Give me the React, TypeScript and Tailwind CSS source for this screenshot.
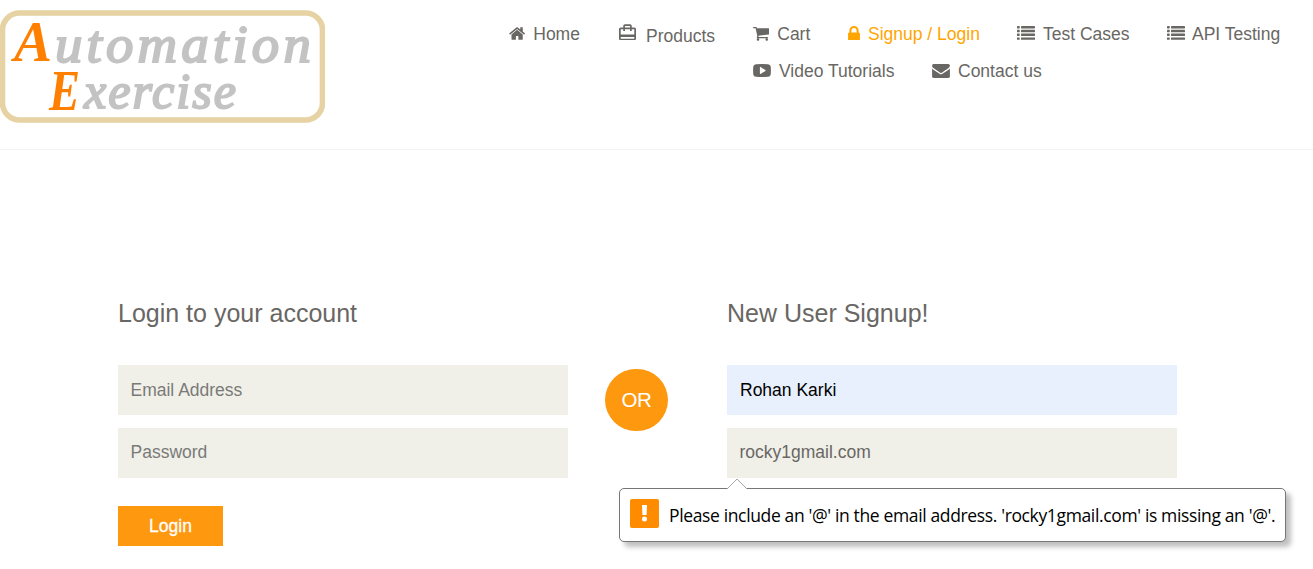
import React from "react";

type IconProps = { viewBox: string; className: string; children: React.ReactNode };

function Icon({ viewBox, className, children }: IconProps) {
  return (
    <svg viewBox={viewBox} className={`block shrink-0 ${className}`} fill="currentColor" aria-hidden="true">
      {children}
    </svg>
  );
}

const HomeIcon = () => (
  <Icon viewBox="64 256 1664 1280" className="w-[16.25px] h-[13px] -mt-px">
    <path d="M1472 992v480q0 26-19 45t-45 19h-384v-384h-256v384h-384q-26 0-45-19t-19-45v-480q0-1 .5-3t.5-3l575-474 575 474q1 2 1 6zm223-69l-62 74q-8 9-21 11h-3q-13 0-21-7l-692-577-692 577q-12 8-24 7-13-2-21-11l-62-74q-8-10-7-23.5t11-21.5l719-599q32-26 76-26t76 26l244 204v-195q0-14 9-23t23-9h192q14 0 23 9t9 23v408l219 182q10 8 11 21.5t-7 23.5z" />
  </Icon>
);

const TravelIcon = () => (
  <Icon viewBox="2 2 20 19" className="w-[17px] h-[16.5px]">
    <path d="M20 6h-3V4c0-1.11-.89-2-2-2H9c-1.11 0-2 .89-2 2v2H4c-1.11 0-2 .89-2 2v11c0 1.11.89 2 2 2h16c1.11 0 2-.89 2-2V8c0-1.11-.89-2-2-2zM9 4h6v2H9V4zm11 15H4v-2h16v2zm0-5H4V8h3v2h2V8h6v2h2V8h3v6z" />
  </Icon>
);

const CartIcon = () => (
  <Icon viewBox="64 256 1664 1408" className="w-[16.25px] h-[13.75px]">
    <path d="M704 1536q0 52-38 90t-90 38-90-38-38-90 38-90 90-38 90 38 38 90zm896 0q0 52-38 90t-90 38-90-38-38-90 38-90 90-38 90 38 38 90zm128-1088v512q0 24-16.5 42.5t-40.5 21.5l-1044 122q13 60 13 70 0 16-24 64h920q26 0 45 19t19 45-19 45-45 19h-1024q-26 0-45-19t-19-45q0-11 8-31.5t16-36 21.5-40 15.5-29.5l-177-823h-204q-26 0-45-19t-19-45 19-45 45-19h256q16 0 28.5 6.5t19.5 15.5 13 24.5 8 26 5.5 29.5 4.5 26h1201q26 0 45 19t19 45z" />
  </Icon>
);

const LockIcon = () => (
  <Icon viewBox="320 128 1152 1408" className="w-[12px] h-[14.5px] -mt-[2px]">
    <path d="M640 768h512v-192q0-106-75-181t-181-75-181 75-75 181v192zm832 96v576q0 40-28 68t-68 28h-960q-40 0-68-28t-28-68v-576q0-40 28-68t68-28h32v-192q0-184 132-316t316-132 316 132 132 316v192h32q40 0 68 28t28 68z" />
  </Icon>
);

const ListIcon = () => (
  <Icon viewBox="0 0 18 14" className="w-[18px] h-[14px] -mt-[2px]">
    {[0, 3.8, 7.6, 11.4].map((y) => (
      <React.Fragment key={y}>
        <rect x="0" y={y} width="2.7" height="2.4" rx="0.4" />
        <rect x="4" y={y} width="14" height="2.4" rx="0.4" />
      </React.Fragment>
    ))}
  </Icon>
);

const VideoIcon = () => (
  <Icon viewBox="0 0 18 13" className="w-[18px] h-[13px] -mt-px">
    <path
      fillRule="evenodd"
      d="M3 .2Q9-.2 15 .2Q17.4.3 17.7 2.6Q18.1 6.5 17.7 10.4Q17.4 12.7 15 12.8Q9 13.2 3 12.8Q.6 12.7.3 10.4Q-.1 6.5.3 2.6Q.6.3 3 .2ZM6.9 3.1V9.7Q7 10.2 7.5 10L12.4 6.9Q12.8 6.5 12.4 6.1L7.5 2.9Q7 2.7 6.9 3.1Z"
    />
  </Icon>
);

const MailIcon = () => (
  <Icon viewBox="0 256 1792 1408" className="w-[18px] h-[14px]">
    <path d="M1792 710v794q0 66-47 113t-113 47h-1472q-66 0-113-47t-47-113v-794q44 49 101 87 362 246 497 345 57 42 92.5 65.5t94.5 48 110 24.5h2q51 0 110-24.5t94.5-48 92.5-65.5q170-123 498-345 57-39 100-87zm0-294q0 79-49 151t-122 123q-376 261-468 325-10 7-42.5 31t-54 38.5-52 32.5-57.5 27-50 9h-2q-23 0-50-9t-57.5-27-52-32.5-54-38.5-42.5-31q-91-64-262-182.5t-205-142.5q-62-42-117-115.5t-55-136.5q0-78 41.5-130t118.5-52h1472q65 0 112.5 47t47.5 113z" />
  </Icon>
);

type NavItemProps = { icon: React.ReactNode; label: string; className: string; active?: boolean };

function NavItem({ icon, label, className, active }: NavItemProps) {
  return (
    <li className={`flex h-5 shrink-0 items-center whitespace-nowrap ${active ? "text-[#ffa500]" : "text-[#696763]"} ${className}`}>
      {icon}
      <a href="#">{label}</a>
    </li>
  );
}

function Logo() {
  return (
    <svg width="325" height="113" viewBox="0 0 325 113" className="mt-[10px] block" role="img" aria-label="Automation Exercise">
      <rect x="2.5" y="3" width="320" height="107" rx="17" fill="none" stroke="#e6d2a2" strokeWidth="5.6" />
      <g fontFamily="'Liberation Serif', serif" fontStyle="italic" fontWeight="700">
        <text x="14" y="51" fontSize="58" fill="#ff8000" textLength="38" lengthAdjust="spacingAndGlyphs">A</text>
        <text x="55" y="52" fontSize="52" fill="#c3c3c3" fontWeight="400" stroke="#c3c3c3" strokeWidth="2" letterSpacing="4" textLength="260" lengthAdjust="spacingAndGlyphs">utomation</text>
        <text x="49" y="100" fontSize="58" fill="#ff8000" textLength="31" lengthAdjust="spacingAndGlyphs">E</text>
        <text x="84" y="98" fontSize="50" fill="#c3c3c3" fontWeight="400" stroke="#c3c3c3" strokeWidth="2" letterSpacing="2" textLength="154" lengthAdjust="spacingAndGlyphs">xercise</text>
      </g>
    </svg>
  );
}

const field =
  "block h-[50px] w-[450px] bg-[#f0f0e9] px-[12.5px] text-[17.5px] text-[#696763] placeholder:text-[#7a7a78] outline-none";

export default function App() {
  return (
    <div className="h-[569px] w-[1313px] overflow-hidden bg-white font-['Liberation_Sans',Arial,sans-serif]">
      <header className="flex h-[150px] border-b border-[#f3f3f2]">
        <div className="w-[509px] shrink-0">
          <Logo />
        </div>
        <nav className="flex pt-6 text-[17.5px] leading-5">
          <ul className="flex">
            <NavItem icon={<HomeIcon />} label="Home" className="w-[110px] gap-[8px]" />
            <NavItem icon={<span className="-mt-[8px]"><TravelIcon /></span>} label="Products" className="mt-[2px] w-[134px] gap-[10px]" />
          </ul>
          <div className="flex flex-col gap-[17px]">
            <ul className="flex">
              <NavItem icon={<CartIcon />} label="Cart" className="w-[95px] gap-[8px]" />
              <NavItem icon={<LockIcon />} label="Signup / Login" className="w-[169px] gap-[8px]" active />
              <NavItem icon={<ListIcon />} label="Test Cases" className="w-[150px] gap-[8px]" />
              <NavItem icon={<ListIcon />} label="API Testing" className="gap-[7px]" />
            </ul>
            <ul className="flex">
              <NavItem icon={<VideoIcon />} label="Video Tutorials" className="w-[179px] gap-[8px]" />
              <NavItem icon={<MailIcon />} label="Contact us" className="gap-[8px]" />
            </ul>
          </div>
        </nav>
      </header>

      <main className="flex pl-[118px] pt-[148px] text-[#696763]">
        <form noValidate className="w-[450px]" onSubmit={(e) => e.preventDefault()}>
          <h2 className="h-[67px] text-[25px] leading-[30px]">Login to your account</h2>
          <input type="email" placeholder="Email Address" className={field} />
          <input type="password" placeholder="Password" className={`mt-[13px] pb-px ${field}`} />
          <button className="mt-7 block h-10 w-[105px] bg-[#fe980f] text-[17.5px] text-white [-webkit-text-stroke:0.3px_white]">
            Login
          </button>
        </form>

        <div className="ml-[37px] mt-[71px] flex h-[62px] w-[63px] items-center justify-center rounded-full bg-[#fe980f] text-[20.5px] tracking-[-0.4px] text-white">
          OR
        </div>

        <form noValidate className="ml-[59px] w-[450px]" onSubmit={(e) => e.preventDefault()}>
          <h2 className="h-[67px] text-[25px] leading-[30px]">New User Signup!</h2>
          <input type="text" defaultValue="Rohan Karki" className="block h-[50px] w-[450px] bg-[#e8f0fe] px-[13px] text-[17.5px] text-black outline-none" />
          <div className="relative mt-[13px]">
            <input type="email" defaultValue="rocky1gmail.com" className={`pb-px ${field}`} />
            <div
              role="alert"
              className="absolute -left-[108px] top-[60px] flex h-[54px] w-[667px] items-center rounded-[5px] border border-[#767676] bg-white pl-[10px] shadow-[5px_5px_5px_rgba(0,0,0,0.25)]"
            >
              <svg width="22" height="12" viewBox="0 0 22 12" className="absolute -top-[11px] left-[106px]">
                <path d="M0 12L1 11L11 1L21 11L22 12Z" fill="white" />
                <path d="M1 11L11 1L21 11" fill="none" stroke="#a8a8a8" />
              </svg>
              <svg width="29" height="29" viewBox="0 0 29 29" className="-mt-[3px] shrink-0">
                <rect width="29" height="29" rx="2" fill="#ff8c00" />
                <path d="M12 6H17L16.6 16H12.4Z" fill="white" />
                <circle cx="14.5" cy="20" r="2.5" fill="white" />
              </svg>
              <span className="ml-[10px] whitespace-nowrap font-['Open_Sans','Noto_Sans',sans-serif] text-[17.5px] tracking-[-0.36px] text-black">
                Please include an '@' in the email address. 'rocky1gmail.com' is missing an '@'.
              </span>
            </div>
          </div>
        </form>
      </main>
    </div>
  );
}
